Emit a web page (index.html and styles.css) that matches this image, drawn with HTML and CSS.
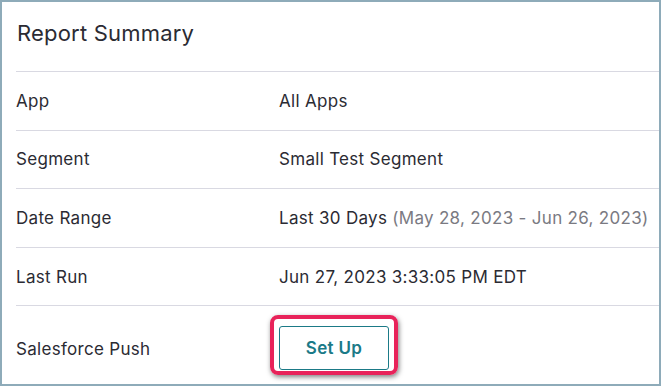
FILE: index.html
```html
<!DOCTYPE html>
<html lang="en">
<head>
    <meta charset="UTF-8">
    <meta name="viewport" content="width=device-width, initial-scale=1.0">
    <title>Report Summary</title>
    <link rel="stylesheet" href="styles.css">
</head>
<body>
<div class="summary">
    <h2 class="summary-title">Report Summary</h2>
    <div class="row">
        <div class="row-label">App</div>
        <div class="row-value">All Apps</div>
    </div>
    <div class="row">
        <div class="row-label">Segment</div>
        <div class="row-value">Small Test Segment</div>
    </div>
    <div class="row">
        <div class="row-label">Date Range</div>
        <div class="row-value">Last 30 Days <span class="muted">(May 28, 2023 - Jun 26, 2023)</span></div>
    </div>
    <div class="row">
        <div class="row-label">Last Run</div>
        <div class="row-value">Jun 27, 2023 3:33:05 PM EDT</div>
    </div>
    <div class="row row-last">
        <div class="row-label">Salesforce Push</div>
        <div class="row-value">
            <span class="highlight"><button class="btn-setup">Set Up</button></span>
        </div>
    </div>
</div>
</body>
</html>
```

FILE: styles.css
```css
body {
    margin: 0;
    padding: 0;
    font-family: Inter, "Noto Sans", sans-serif;
    color: #2b2b33;
    background-color: #fff;
}

.summary {
    box-sizing: border-box;
    width: 661px;
    height: 386px;
    border: 2px solid #8eabb9;
    background-color: #fff;
    display: flex;
    flex-direction: column;
}

.summary-title {
    margin: 0;
    height: 69px;
    padding-left: 15px;
    padding-bottom: 7px;
    box-sizing: border-box;
    display: flex;
    align-items: center;
    font-size: 22px;
    font-weight: 400;
    letter-spacing: 0.2px;
    color: #2b2b33;
}

.row {
    margin-left: 14px;
    border-top: 1px solid #d9d9e2;
    height: 57.6px;
    display: flex;
    align-items: center;
    font-size: 17px;
    letter-spacing: 0.3px;
}

.row-label {
    width: 263px;
}

.row-value {
    flex: 1;
}

.muted {
    color: #7a7a82;
}

.row-last {
    flex: 1;
    height: auto;
}

.row-last .row-label {
    padding-top: 8px;
}

.highlight {
    display: inline-block;
    margin-left: -9px;
    padding: 7px 5px 1px 5px;
    border: 4px solid #e8235a;
    border-radius: 8px;
    box-shadow: 1px 2px 5px rgba(0,0,0,0.5);
}

.btn-setup {
    display: block;
    width: 110px;
    height: 44px;
    background-color: #fff;
    border: 1px solid #1b7a87;
    border-radius: 3px;
    color: #1b7a87;
    font-family: Inter, "Noto Sans", sans-serif;
    font-size: 17px;
    font-weight: 600;
    letter-spacing: 0.3px;
    cursor: pointer;
}
```
